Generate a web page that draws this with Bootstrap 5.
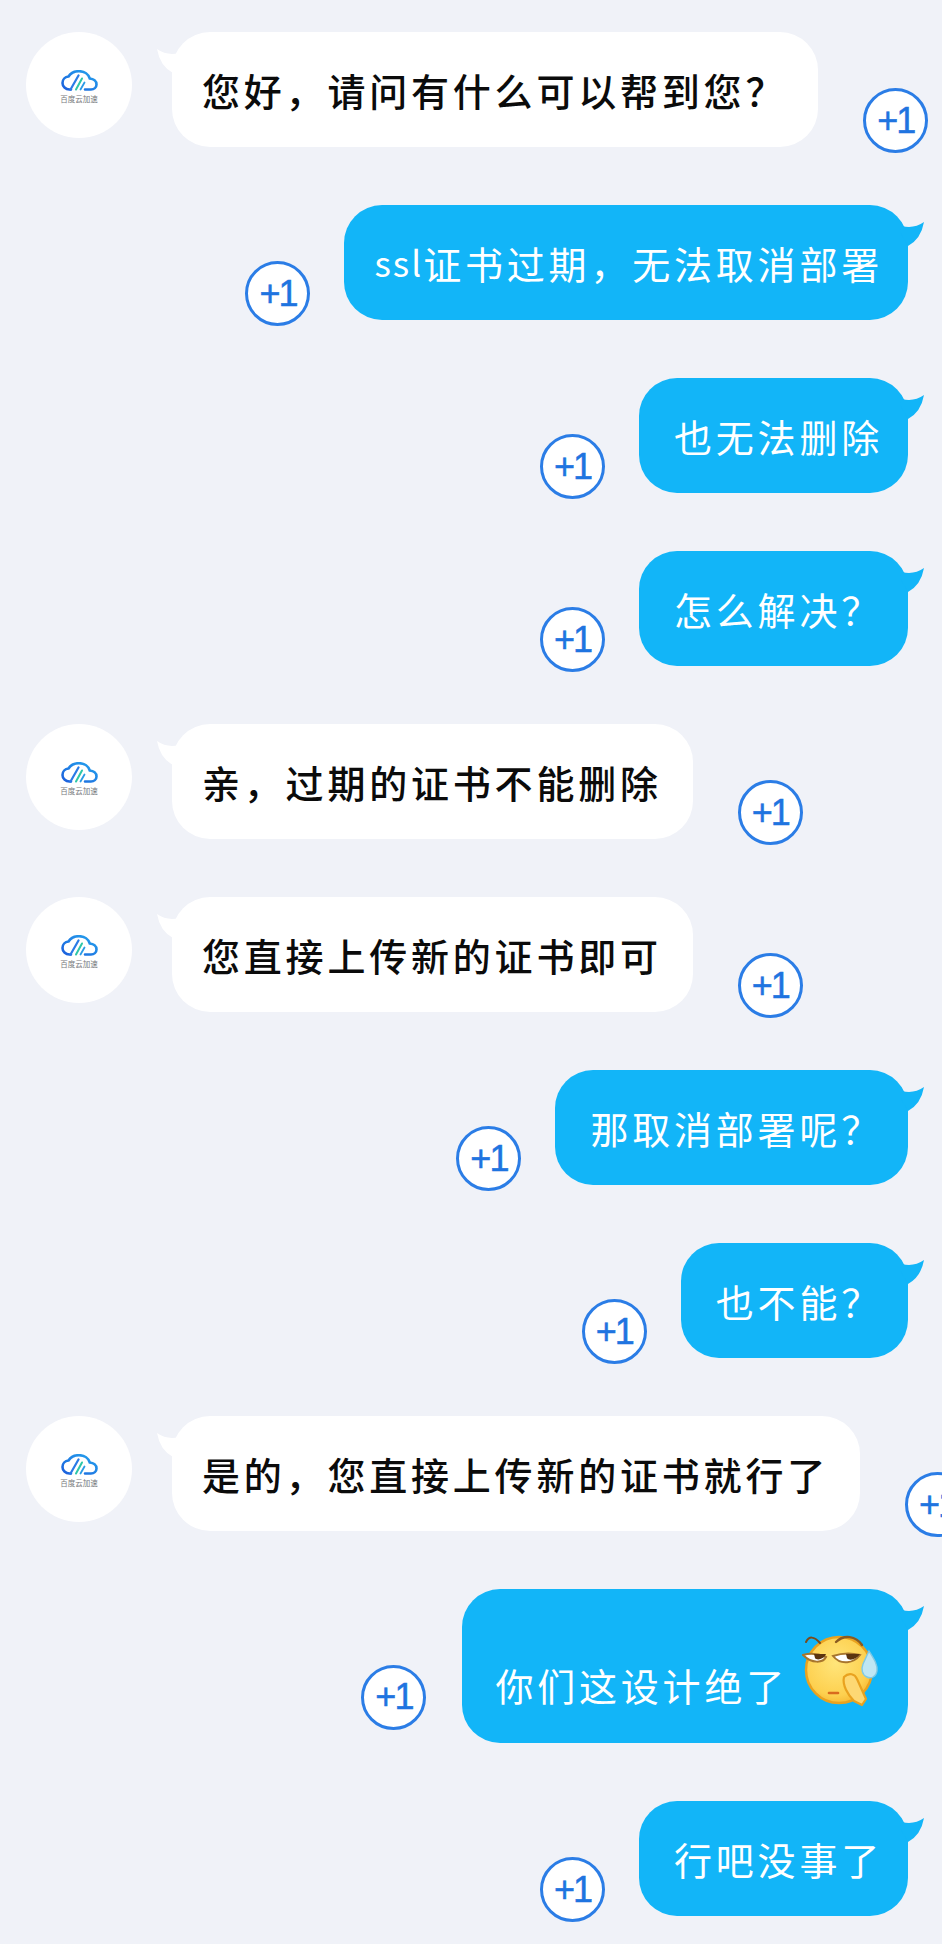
<!DOCTYPE html>
<html lang="zh-CN">

<head>
    <meta charset="UTF-8">
    <meta name="viewport" content="width=device-width, initial-scale=1.0">
    <title>客服对话</title>
    <link href="https://cdn.jsdelivr.net/npm/bootstrap@5.3.3/dist/css/bootstrap.min.css" rel="stylesheet">
    <style>
        body {
            background: #f0f2f8;
            font-family: "Noto Sans CJK SC", "Liberation Sans", sans-serif;
        }

        .chat-page {
            width: 942px;
            height: 1944px;
            padding: 32px 34px 0 26px;
            gap: 58px;
        }

        .chat-avatar {
            width: 106px;
            height: 106px;
            margin-right: 40px;
            padding-top: 4px;
            flex-shrink: 0;
            align-self: flex-start;
        }

        .avatar-name {
            font-size: 7.5px;
            line-height: 10px;
            color: #77797d;
            white-space: nowrap;
            margin-top: 3px;
        }

        .bubble {
            height: 115px;
            border-radius: 38px;
            font-size: 38px;
            letter-spacing: 3.8px;
            white-space: nowrap;
            flex-shrink: 0;
        }

        .bubble-in {
            padding: 0 31px 0 30px;
            background: #fff;
            color: #0b0b0b;
            font-weight: 500;
        }

        .bubble-out {
            padding: 0 25px 0 35px;
            background: #12b5f8;
            color: #fff;
        }

        .bubble-tall {
            height: 154px;
            padding: 0 28px 0 33px;
        }

        .tall-text {
            margin-top: 36px;
        }

        .latin {
            margin-left: -5px;
            font-size: 35px;
            letter-spacing: 2px;
        }

        .tail {
            position: absolute;
            top: 15px;
            width: 24px;
            height: 30px;
        }

        .bubble-in .tail {
            left: -15px;
            fill: #fff;
        }

        .bubble-out .tail {
            right: -16px;
            fill: #12b5f8;
            transform: scaleX(-1);
        }

        .plus-one {
            width: 65px;
            height: 65px;
            margin-top: 31px;
            margin-bottom: -31px;
            flex-shrink: 0;
            border: 3px solid #2b7de6;
            font-family: "Liberation Sans", sans-serif;
            font-size: 36px;
            letter-spacing: -2px;
            color: #1f74e0;
            -webkit-text-stroke: 0.5px #1f74e0;
        }

        .gap-in {
            margin-left: 45px;
        }

        .gap-out {
            margin-right: 34px;
        }

        .gap-tall {
            margin-right: 36px;
        }

        .sticker {
            width: 78px;
            height: 74px;
            margin: 8px 0 0 14px;
            flex-shrink: 0;
        }
    </style>
</head>

<body>

    <svg width="0" height="0" class="position-absolute">
        <defs>
            <linearGradient id="cloudLine" x1="0" y1="1" x2="1" y2="0">
                <stop offset="0" stop-color="#1c5fdc" />
                <stop offset="1" stop-color="#25a4ee" />
            </linearGradient>
            <radialGradient id="faceFill" cx="0.45" cy="0.4" r="0.65">
                <stop offset="0" stop-color="#ffe57a" />
                <stop offset="0.75" stop-color="#fdd04f" />
                <stop offset="1" stop-color="#f6b52f" />
            </radialGradient>
            <symbol id="tailShape" viewBox="0 0 24 30">
                <path d="M0 2Q10 9 22 6L24 12L16 26Q3 19 0 2Z" />
            </symbol>
            <symbol id="cloudLogo" viewBox="0 0 37 21">
                <path d="M10 19.5H8.5C4.5 19.5 1.5 16.5 1.5 13C1.5 9.5 4 6.8 7.5 6.5C9.5 3.2 13.5 1.2 18 1.2C23.5 1.2 27.5 4.5 28.8 8.5C32.5 8.8 35.5 11 35.5 14.5C35.5 17.5 33 19.5 30 19.5H24"
                    fill="none" stroke="url(#cloudLine)" stroke-width="2.6" stroke-linecap="round" />
                <path d="M9.5 19.5L17.5 5.5" fill="none" stroke="#2a7be6" stroke-width="2.2" stroke-linecap="round" />
                <path d="M15 19.5L21 8.5" fill="none" stroke="#2fc7a8" stroke-width="2" stroke-linecap="round" />
                <path d="M19.5 19.5L23.5 12.5" fill="none" stroke="#2a9be6" stroke-width="1.8" stroke-linecap="round" />
            </symbol>
        </defs>
    </svg>

    <div class="chat-page d-flex flex-column overflow-hidden">

        <div class="d-flex align-items-center">
            <div class="chat-avatar rounded-circle bg-white d-flex flex-column align-items-center justify-content-center">
                <svg width="37" height="21"><use href="#cloudLogo" /></svg>
                <div class="avatar-name">百度云加速</div>
            </div>
            <div class="bubble bubble-in position-relative d-flex align-items-center">
                <svg class="tail"><use href="#tailShape" /></svg>您好，请问有什么可以帮到您？
            </div>
            <div class="plus-one gap-in rounded-circle bg-white d-flex align-items-center justify-content-center">+1</div>
        </div>

        <div class="d-flex align-items-center justify-content-end">
            <div class="plus-one gap-out rounded-circle bg-white d-flex align-items-center justify-content-center">+1</div>
            <div class="bubble bubble-out position-relative d-flex align-items-center">
                <svg class="tail"><use href="#tailShape" /></svg><span class="latin">ssl</span>证书过期，无法取消部署
            </div>
        </div>

        <div class="d-flex align-items-center justify-content-end">
            <div class="plus-one gap-out rounded-circle bg-white d-flex align-items-center justify-content-center">+1</div>
            <div class="bubble bubble-out position-relative d-flex align-items-center">
                <svg class="tail"><use href="#tailShape" /></svg>也无法删除
            </div>
        </div>

        <div class="d-flex align-items-center justify-content-end">
            <div class="plus-one gap-out rounded-circle bg-white d-flex align-items-center justify-content-center">+1</div>
            <div class="bubble bubble-out position-relative d-flex align-items-center">
                <svg class="tail"><use href="#tailShape" /></svg>怎么解决？
            </div>
        </div>

        <div class="d-flex align-items-center">
            <div class="chat-avatar rounded-circle bg-white d-flex flex-column align-items-center justify-content-center">
                <svg width="37" height="21"><use href="#cloudLogo" /></svg>
                <div class="avatar-name">百度云加速</div>
            </div>
            <div class="bubble bubble-in position-relative d-flex align-items-center">
                <svg class="tail"><use href="#tailShape" /></svg>亲，过期的证书不能删除
            </div>
            <div class="plus-one gap-in rounded-circle bg-white d-flex align-items-center justify-content-center">+1</div>
        </div>

        <div class="d-flex align-items-center">
            <div class="chat-avatar rounded-circle bg-white d-flex flex-column align-items-center justify-content-center">
                <svg width="37" height="21"><use href="#cloudLogo" /></svg>
                <div class="avatar-name">百度云加速</div>
            </div>
            <div class="bubble bubble-in position-relative d-flex align-items-center">
                <svg class="tail"><use href="#tailShape" /></svg>您直接上传新的证书即可
            </div>
            <div class="plus-one gap-in rounded-circle bg-white d-flex align-items-center justify-content-center">+1</div>
        </div>

        <div class="d-flex align-items-center justify-content-end">
            <div class="plus-one gap-out rounded-circle bg-white d-flex align-items-center justify-content-center">+1</div>
            <div class="bubble bubble-out position-relative d-flex align-items-center">
                <svg class="tail"><use href="#tailShape" /></svg>那取消部署呢？
            </div>
        </div>

        <div class="d-flex align-items-center justify-content-end">
            <div class="plus-one gap-out rounded-circle bg-white d-flex align-items-center justify-content-center">+1</div>
            <div class="bubble bubble-out position-relative d-flex align-items-center">
                <svg class="tail"><use href="#tailShape" /></svg>也不能？
            </div>
        </div>

        <div class="d-flex align-items-center">
            <div class="chat-avatar rounded-circle bg-white d-flex flex-column align-items-center justify-content-center">
                <svg width="37" height="21"><use href="#cloudLogo" /></svg>
                <div class="avatar-name">百度云加速</div>
            </div>
            <div class="bubble bubble-in position-relative d-flex align-items-center">
                <svg class="tail"><use href="#tailShape" /></svg>是的，您直接上传新的证书就行了
            </div>
            <div class="plus-one gap-in rounded-circle bg-white d-flex align-items-center justify-content-center">+1</div>
        </div>

        <div class="d-flex align-items-center justify-content-end">
            <div class="plus-one gap-tall rounded-circle bg-white d-flex align-items-center justify-content-center">+1</div>
            <div class="bubble bubble-tall bubble-out position-relative d-flex align-items-center">
                <svg class="tail"><use href="#tailShape" /></svg><span class="tall-text">你们这设计绝了</span>
                <svg class="sticker" viewBox="0 0 78 74">
                    <circle cx="37" cy="37" r="33" fill="url(#faceFill)" stroke="#e9a21f" stroke-width="2.5" />
                    <path d="M4 9C7 3 12 3 18 10" fill="none" stroke="#7a4a1c" stroke-width="2" stroke-linecap="round" />
                    <path d="M34 9C42 1 54 3 60 12" fill="none" stroke="#8a5a20" stroke-width="2.4" stroke-linecap="round" />
                    <path d="M1 22C8 20 17 21 24 24C21 30 10 31 1 22Z" fill="#fff" stroke="#a8752c" stroke-width="2" />
                    <path d="M12 21H24C22 26 15 28 13 25Z" fill="#5b3410" />
                    <path d="M31 23C40 20 50 20 58 22C52 30 39 33 31 23Z" fill="#fff" stroke="#a8752c" stroke-width="2" />
                    <path d="M44 21H58C54 27 47 28 45 25Z" fill="#5b3410" />
                    <path d="M27 60H36" stroke="#d96a1e" stroke-width="2.6" stroke-linecap="round" />
                    <path d="M42 44C47 39 53 41 55 46L64 66L60 72L52 68C46 62 40 52 42 44Z" fill="#fdd873" stroke="#e9a21f" stroke-width="2.2" stroke-linejoin="round" />
                    <path d="M67 18C72 26 76 32 75 38C74 44 69 46 65 44C60 42 59 36 61 31Z" fill="#bfe6f3" stroke="#7fc9e4" stroke-width="1.4" />
                </svg>
            </div>
        </div>

        <div class="d-flex align-items-center justify-content-end">
            <div class="plus-one gap-out rounded-circle bg-white d-flex align-items-center justify-content-center">+1</div>
            <div class="bubble bubble-out position-relative d-flex align-items-center">
                <svg class="tail"><use href="#tailShape" /></svg>行吧没事了
            </div>
        </div>

    </div>

    <script src="https://cdn.jsdelivr.net/npm/bootstrap@5.3.3/dist/js/bootstrap.bundle.min.js"></script>
</body>

</html>
